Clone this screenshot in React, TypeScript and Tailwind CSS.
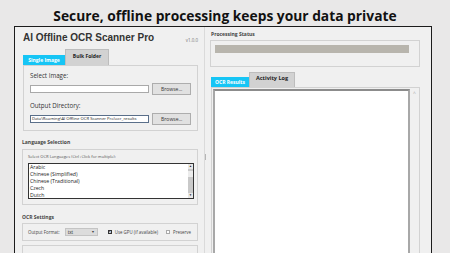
import { useState } from "react";

const languages = ["Arabic", "Chinese (Simplified)", "Chinese (Traditional)", "Czech", "Dutch"];

const ui = { fontFamily: '"Open Sans", "Noto Sans", sans-serif' };

const Browse = ({ className = "" }: { className?: string }) => (
  <button
    type="button"
    className={`w-[39px] h-[12px] bg-[#e1e1e1] border border-[#adadad] text-[5px] leading-none text-[#333] flex items-center justify-center ${className}`}
  >
    Browse...
  </button>
);

const App = () => {
  const [tab] = useState("single");

  return (
    <div className="w-[450px] h-[253px] bg-[#e9e8e8] overflow-hidden flex flex-col" style={ui}>
      {/* headline */}
      <div className="h-[29px] flex items-start justify-center pt-[6px]">
        <h1 className="text-[13.8px] leading-[20px] font-bold text-[#111]">
          Secure, offline processing keeps your data private
        </h1>
      </div>

      {/* app window */}
      <div className="ml-[14px] w-[418px] h-[240px] shrink-0 border border-[#1c1c1c] bg-[#f0f0f0] flex">
        {/* left panel */}
        <div className="w-[189px] shrink-0 flex flex-col pl-[8px]">
          <div className="w-[175px] h-[22px] flex items-start justify-between">
            <h2
              className="mt-[6px] text-[10px] leading-none font-bold text-[#333]"
              style={{ fontFamily: '"Liberation Sans", Arial, sans-serif' }}
            >
              AI Offline OCR Scanner Pro
            </h2>
            <span className="mt-[11px] text-[4.5px] leading-none text-[#777]">v1.0.0</span>
          </div>

          {/* tabs */}
          <div className="flex items-end h-[16px] text-[5px] font-bold leading-none">
            <div className="w-[42px] h-[10px] bg-[#16c5f5] text-white flex items-center justify-center">
              {tab === "single" ? "Single Image" : "Single Image"}
            </div>
            <div className="w-[44px] h-[16px] bg-[#d2d2d2] border border-b-0 border-[#bdbdbd] text-[#222] flex items-center justify-center pb-[2px]">
              Bulk Folder
            </div>
          </div>

          <div className="w-[175px] h-[66px] border border-[#d2d2d2] px-[6px] pt-[7px] text-[#333]">
            <div className="text-[6.2px] leading-none">Select Image:</div>
            <div className="flex items-center gap-[3px] mt-[4px]">
              <div className="w-[121px] h-[8px] bg-white border border-[#a9a9a9]" />
              <Browse />
            </div>
            <div className="text-[6.2px] leading-none mt-[8px]">Output Directory:</div>
            <div className="flex items-center gap-[3px] mt-[4px]">
              <div className="w-[121px] h-[8px] bg-white border border-[#5a6f8a] text-[4.2px] leading-[6px] px-[1px] overflow-hidden whitespace-nowrap text-[#222]">
                Data\Roaming\AI Offline OCR Scanner Pro\ocr_results
              </div>
              <Browse />
            </div>
          </div>

          {/* language selection */}
          <div className="mt-[9px] ml-[-1px] text-[5px] font-bold leading-none text-[#444]">Language Selection</div>
          <div className="ml-[-1px] mt-[4px] w-[176px] h-[56px] border border-[#d2d2d2] px-[5px] pt-[5px]">
            <div className="text-[4.1px] leading-none text-[#555]">Select OCR Languages (Ctrl+Click for multiple):</div>
            <div className="mt-[4px] w-[166px] h-[36px] bg-white border border-[#333] flex">
              <ul className="flex-1 text-[5.2px] leading-[7px] text-[#222] pl-[1px]">
                {languages.map((l) => (
                  <li key={l}>{l}</li>
                ))}
              </ul>
              <div className="w-[5px] bg-[#c9c9c9] flex flex-col justify-between">
                <div className="h-[5px] bg-[#e8e8e8] flex items-center justify-center text-[3px] text-[#222]">▲</div>
                <div className="h-[6px] bg-[#ececec] mb-[14px]" />
                <div className="h-[5px] bg-[#e8e8e8] flex items-center justify-center text-[3px] text-[#222]">▼</div>
              </div>
            </div>
          </div>

          {/* ocr settings */}
          <div className="mt-[10px] ml-[-1px] text-[5px] font-bold leading-none text-[#444]">OCR Settings</div>
          <div className="ml-[-1px] mt-[3px] w-[176px] h-[18px] border border-[#d2d2d2] px-[5px] flex items-center text-[4.4px] text-[#444] leading-none whitespace-nowrap">
            <span>Output Format:</span>
            <div className="ml-[5px] w-[33px] h-[8px] bg-[#dcdcdc] border border-[#c4c4c4] flex items-center justify-between px-[2px]">
              <span className="text-[#222]">txt</span>
              <span className="text-[3.5px]">▼</span>
            </div>
            <div className="ml-[10px] w-[4px] h-[4px] border border-[#333] flex items-center justify-center text-[4px] leading-none">✕</div>
            <span className="ml-[3px]">Use GPU (if available)</span>
            <div className="ml-[8px] w-[4px] h-[4px] border border-[#aaa] bg-white" />
            <span className="ml-[3px]">Preserve</span>
          </div>
          <div className="ml-[-1px] mt-[4px] w-[176px] h-[20px] border border-[#d2d2d2]" />
        </div>

        {/* sash */}
        <div className="w-[2px] shrink-0 border-l border-[#dadada] flex flex-col">
          <div className="mt-[127px] h-[6px] w-[1px] bg-[#b5b5b5]" />
        </div>

        {/* right panel */}
        <div className="flex-1 flex flex-col pl-[4px]">
          <div className="mt-[5px] ml-[1px] text-[5px] font-bold leading-none text-[#444]">Processing Status</div>
          <div className="mt-[3px] w-[210px] h-[27px] border border-[#d2d2d2] pl-[4px] pt-[4px]">
            <div className="w-[194px] h-[8px] bg-[#b8b5ad]" />
          </div>

          <div className="mt-[5px] ml-[1px] flex items-end h-[15px] text-[5px] font-bold leading-none">
            <div className="w-[38px] h-[10px] bg-[#16c5f5] text-white flex items-center justify-center">OCR Results</div>
            <div className="w-[46px] h-[15px] bg-[#d2d2d2] border border-b-0 border-[#bdbdbd] text-[#222] flex items-center justify-center pb-[2px] text-[5.5px]">
              Activity Log
            </div>
          </div>
          <div className="ml-[1px] w-[209px] flex-1 border border-[#d2d2d2] flex pl-[1px] pt-[1px]">
            <div className="w-[197px] h-full bg-white border-2 border-b-0 border-[#a8a8a8] border-t-[#8c8c8c]" />
            <div className="flex-1 flex justify-center pt-[2px] text-[5px] leading-none text-[#aaa]">^</div>
          </div>
        </div>
      </div>
    </div>
  );
};

export default App;
